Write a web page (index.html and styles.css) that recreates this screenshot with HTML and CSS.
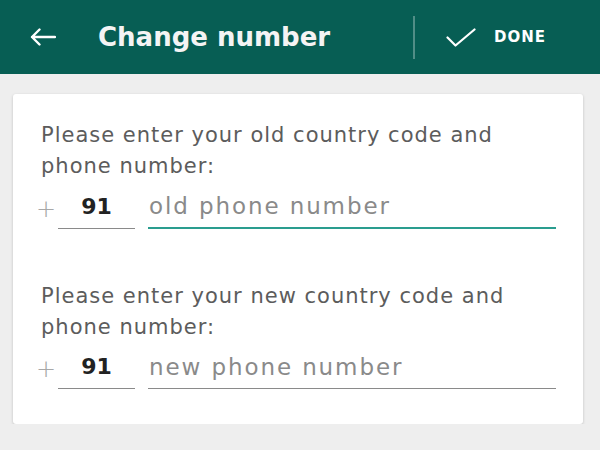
FILE: index.html
```html
<!DOCTYPE html>
<html lang="en">
<head>
    <meta charset="UTF-8">
    <title>Change number</title>
    <link rel="stylesheet" href="styles.css">
</head>
<body>
    <div class="toolbar">
        <svg class="back-icon" width="26" height="18" viewBox="0 0 26 18">
            <path d="M25 9H2M9.5 1.5L2 9l7.5 7.5" fill="none" stroke="#ffffff" stroke-width="2.4" stroke-linecap="round" stroke-linejoin="round"/>
        </svg>
        <h1 class="title">Change number</h1>
        <div class="divider"></div>
        <button type="button" class="done-button">
            <svg width="30" height="19" viewBox="0 0 30 19">
                <path d="M1.5 9.5l8 8L28.5 1.5" fill="none" stroke="#ffffff" stroke-width="2.2" stroke-linecap="round" stroke-linejoin="round"/>
            </svg>
            <span>DONE</span>
        </button>
    </div>

    <div class="card">
        <div class="section">
            <p class="prompt">Please enter your old country code and phone number:</p>
            <div class="number-row">
                <span class="plus">+</span>
                <input type="text" class="code-input" value="91">
                <input type="text" class="phone-input active" placeholder="old phone number">
            </div>
        </div>
        <div class="section">
            <p class="prompt">Please enter your new country code and phone number:</p>
            <div class="number-row">
                <span class="plus">+</span>
                <input type="text" class="code-input" value="91">
                <input type="text" class="phone-input" placeholder="new phone number">
            </div>
        </div>
    </div>
</body>
</html>
```

FILE: styles.css
```css
body {
    margin: 0;
    background-color: #eeeeee; /* light grey page */
    font-family: "DejaVu Sans", Roboto, Arial, sans-serif;
}
.toolbar {
    height: 74px;
    background-color: #075e54; /* whatsapp teal */
    display: flex;
    align-items: center;
    color: #ffffff;
}
.back-icon {
    margin-left: 30px;
    margin-right: 42px;
    flex-shrink: 0;
}
.title {
    margin: 0;
    font-size: 26px;
    font-weight: 700;
    flex: 1;
    color: #f4f4f4;
}
.divider {
    width: 2px;
    height: 43px;
    background-color: rgba(255, 255, 255, 0.3);
}
.done-button {
    background: none;
    border: none;
    color: #ffffff;
    display: flex;
    align-items: center;
    gap: 18px;
    padding: 0 54px 0 31px;
    font-family: inherit;
    font-size: 15px;
    font-weight: 700;
    letter-spacing: 1px;
    cursor: pointer;
}
.card {
    background-color: #ffffff;
    margin: 20px 17px 0 13px;
    padding: 26px 27px 35px 28px;
    border-radius: 3px;
    box-shadow: 0 1px 3px rgba(0, 0, 0, 0.2); /* card depth */
}
.section + .section {
    margin-top: 52px;
}
.prompt {
    margin: 0;
    font-size: 21px;
    line-height: 31px;
    letter-spacing: 1px;
    color: #5c5c5c;
}
.number-row {
    display: flex;
    align-items: flex-end;
    margin-top: 9px;
    margin-left: -5px;
}
.plus {
    font-size: 24px;
    font-weight: 300;
    color: #a8a8a8;
    width: 22px;
    padding-bottom: 6px;
}
input {
    border: none;
    border-bottom: 1.5px solid #8a8a8a;
    font-family: inherit;
    font-size: 23px;
    line-height: 30px;
    height: 30px;
    padding: 0 0 6px 0;
    outline: none;
    background: transparent;
}
.code-input {
    width: 77px;
    text-align: center;
    color: #222222;
    font-size: 22px;
    font-weight: 700;
    margin-right: 13px;
}
.phone-input {
    flex: 1;
    color: #333333;
    letter-spacing: 1.9px;
    padding-left: 1px;
}
.phone-input::placeholder {
    color: #8a8a8a;
}
.phone-input.active {
    border-bottom: 2px solid #2a9d8f; /* focused field */
}
```
